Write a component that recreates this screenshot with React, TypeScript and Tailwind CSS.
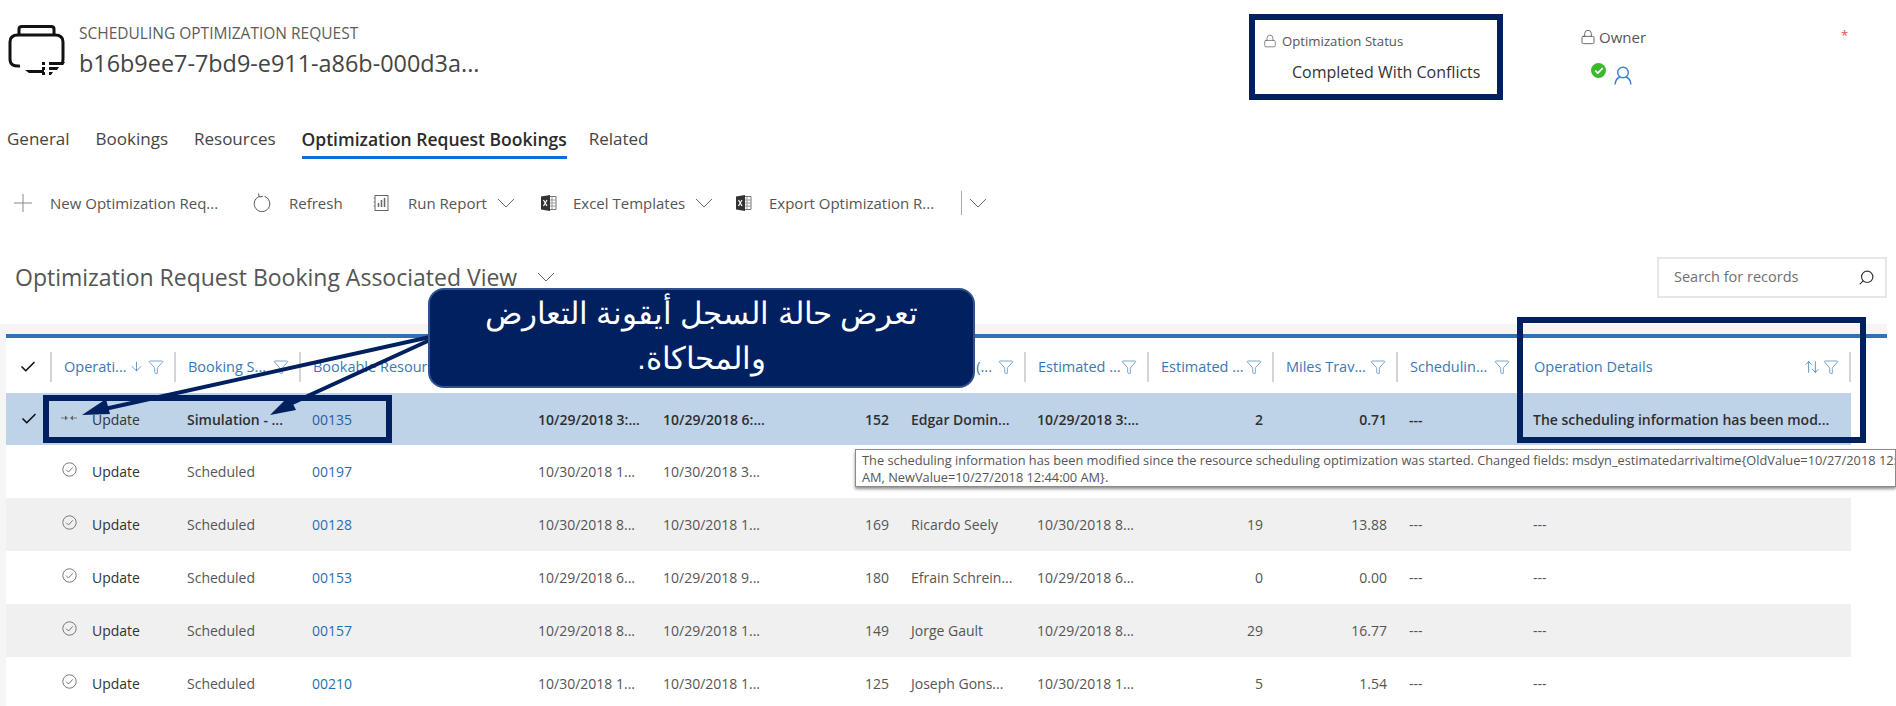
import { Check, Search, ArrowDown, ArrowUpDown, Lock, Filter } from "lucide-react";

const cols = "grid w-[1845px] grid-cols-[46px_124px_125px_226px_125px_126px_122px_126px_123px_125px_124px_124px_329px]";

type Row = {
  id: string;
  status: string;
  start: string;
  end: string;
  num?: string;
  name?: string;
  arrival?: string;
  est?: string;
  miles?: string;
  sched?: string;
  details?: string;
};

const rows: Row[] = [
  { id: "00197", status: "Scheduled", start: "10/30/2018 1...", end: "10/30/2018 3..." },
  { id: "00128", status: "Scheduled", start: "10/30/2018 8...", end: "10/30/2018 1...", num: "169", name: "Ricardo Seely", arrival: "10/30/2018 8...", est: "19", miles: "13.88", sched: "---", details: "---" },
  { id: "00153", status: "Scheduled", start: "10/29/2018 6...", end: "10/29/2018 9...", num: "180", name: "Efrain Schrein...", arrival: "10/29/2018 6...", est: "0", miles: "0.00", sched: "---", details: "---" },
  { id: "00157", status: "Scheduled", start: "10/29/2018 8...", end: "10/29/2018 1...", num: "149", name: "Jorge Gault", arrival: "10/29/2018 8...", est: "29", miles: "16.77", sched: "---", details: "---" },
  { id: "00210", status: "Scheduled", start: "10/30/2018 1...", end: "10/30/2018 1...", num: "125", name: "Joseph Gons...", arrival: "10/30/2018 1...", est: "5", miles: "1.54", sched: "---", details: "---" },
];

function AppIcon() {
  return (
    <svg width="58" height="54" viewBox="0 0 58 54" className="shrink-0">
      <g fill="none" stroke="#111" strokeWidth="3">
        <path d="M11 9V4Q11 1.5 14 1.5H43Q46 1.5 46 4V9" />
        <path d="M12 41Q2 42 2 34V17Q2 10 10 10H47Q55 10 55 17V34Q55 37 54 39" />
      </g>
      <path d="M17 45H36V48H21Z" fill="#111" />
      <path d="M41 37H57L55 40H41ZM41 42H51L49 45H41ZM41 47H45L43 50H41Z" fill="#111" />
      <path d="M34 37h3v3h-3zM34 42h3v3h-3zM34 47h3v3h-3z" fill="#111" />
    </svg>
  );
}

function Chevron() {
  return (
    <svg width="18" height="10" viewBox="0 0 18 10" className="shrink-0">
      <path d="M1 1L9 9L17 1" fill="none" stroke="#666" strokeWidth="1" />
    </svg>
  );
}

function PlusIcon() {
  return (
    <svg width="18" height="18" viewBox="0 0 18 18" className="shrink-0">
      <path d="M9 0V18M0 9H18" stroke="#888" strokeWidth="1" />
    </svg>
  );
}

function RefreshIcon() {
  return (
    <svg width="18" height="20" viewBox="0 0 18 20" className="shrink-0">
      <path d="M6 3.6A7.8 7.8 0 1 0 11.5 3.4" fill="none" stroke="#555" strokeWidth="1" />
      <path d="M5.5 0.5L6.3 4L9.8 3.4" fill="none" stroke="#555" strokeWidth="1" />
    </svg>
  );
}

function ExcelIcon() {
  return (
    <svg width="17" height="18" viewBox="0 0 17 18" className="shrink-0">
      <path d="M8 2.5H16V15.5H8" fill="none" stroke="#777" />
      <path d="M9 6H16M9 9H16M9 12H16M12 3V15" stroke="#999" />
      <path d="M1 2.5L10 1V17L1 15.5Z" fill="#333" />
      <path d="M3.5 6L7 12M7 6L3.5 12" stroke="#fff" strokeWidth="1.2" />
    </svg>
  );
}

function ReportIcon() {
  return (
    <svg width="16" height="18" viewBox="0 0 16 18" className="shrink-0">
      <rect x="2" y="1.5" width="13" height="15" fill="none" stroke="#666" />
      <path d="M5.5 13V9M8.5 13V6M11.5 13V4" stroke="#666" strokeWidth="1.5" />
      <path d="M0.5 4h2M0.5 8h2M0.5 12h2" stroke="#888" />
    </svg>
  );
}

function ConflictIcon() {
  return (
    <svg width="16" height="8" viewBox="0 0 16 8" className="shrink-0 -mt-[3px]">
      <path d="M0 4H5M11 4H16" stroke="#777" strokeWidth="1.2" />
      <path d="M4 1.5L7 4L4 6.5ZM12 1.5L9 4L12 6.5Z" fill="#666" />
    </svg>
  );
}

function CheckCircle() {
  return (
    <svg width="15" height="15" viewBox="0 0 15 15" className="shrink-0 -mt-[4px]">
      <circle cx="7.5" cy="7.5" r="6.7" fill="none" stroke="#777" />
      <path d="M4.2 7.7L6.5 10L10.8 5.3" fill="none" stroke="#777" />
    </svg>
  );
}

function HeaderCell({ label, filter = true, sort, end }: { label: string; filter?: boolean; sort?: "down" | "both"; end?: boolean }) {
  return (
    <div className="flex items-center h-[30px] pl-[12px] pr-[10px] border-r-2 border-[#d4d4d4]">
      <span className={`flex-1 min-w-0 whitespace-nowrap overflow-hidden text-[14.5px] text-[#3a78b5] ${end ? "text-right pr-[6px]" : ""}`}>{label}</span>
      {sort === "down" && <ArrowDown size={15} strokeWidth={1.2} className="text-[#3a78b5] mr-[4px] shrink-0" />}
      {sort === "both" && <ArrowUpDown size={16} strokeWidth={1.2} className="text-[#3a78b5] mr-[3px] shrink-0" />}
      {filter && <Filter size={16} strokeWidth={1} className="text-[#3a78b5] shrink-0" />}
    </div>
  );
}

function Cell({ children, right, bold }: { children?: React.ReactNode; right?: boolean; bold?: boolean }) {
  return (
    <div className={`px-[11px] text-[14px] whitespace-nowrap overflow-hidden ${right ? "text-right" : ""} ${bold ? "font-semibold text-[#2f2f2f]" : "text-[#555]"}`}>
      {children}
    </div>
  );
}

export default function App() {
  return (
    <div className="relative w-[1896px] h-[706px] overflow-hidden bg-white font-['Open_Sans',sans-serif]">
      {/* record header */}
      <div className="flex h-[112px]">
        <div className="ml-[8px] mt-[25px] w-[71px]">
          <AppIcon />
        </div>
        <div className="w-[1170px] pt-[23px]">
          <div className="text-[15.5px] leading-[20px] text-[#5c5c5c]">SCHEDULING OPTIMIZATION REQUEST</div>
          <div className="mt-[5px] text-[23.4px] leading-[30px] text-[#444]">b16b9ee7-7bd9-e911-a86b-000d3a...</div>
        </div>
        <div className="mt-[14px] w-[254px] h-[86px] border-[6px] border-[#002060] pl-[8px] pt-[13px]">
          <div className="flex items-center gap-[5px] text-[13.2px] leading-[16px] text-[#555]">
            <Lock size={14} strokeWidth={1.3} className="text-[#666]" />
            Optimization Status
          </div>
          <div className="ml-[29px] mt-[12px] text-[16px] leading-[22px] text-[#333] whitespace-nowrap">Completed With Conflicts</div>
        </div>
        <div className="ml-[77px] w-[265px] pt-[27px]">
          <div className="flex items-center gap-[3px] text-[15px] leading-[20px] text-[#555]">
            <Lock size={16} strokeWidth={1.3} className="text-[#555]" />
            Owner
          </div>
          <div className="ml-[11px] mt-[16px] flex items-start gap-[8px]">
            <div className="w-[15px] h-[15px] rounded-full bg-[#3db82e] flex items-center justify-center">
              <Check size={10} strokeWidth={4} className="text-white" />
            </div>
            <svg width="18" height="19" viewBox="0 0 18 19" className="mt-[3px]">
              <circle cx="9" cy="6.5" r="5.3" fill="none" stroke="#3d7fc9" strokeWidth="1.4" />
              <path d="M1 18.5C1.5 13.5 4.5 11.5 6 11M17 18.5C16.5 13.5 13.5 11.5 12 11" fill="none" stroke="#3d7fc9" strokeWidth="1.4" />
            </svg>
          </div>
        </div>
        <div className="-ml-[4px] pt-[27px] text-[13px] leading-[16px] text-[#e8474c]">*</div>
      </div>

      {/* tabs */}
      <div className="flex items-start gap-[26px] h-[70px] pl-[7px] pt-[15px] text-[17px] leading-[24px] text-[#444]">
        <span>General</span>
        <span>Bookings</span>
        <span>Resources</span>
        <span className="font-semibold text-[17.5px] text-[#2b2b2b] border-b-[3px] border-[#0f6ce0] h-[32px]">Optimization Request Bookings</span>
        <span className="-ml-[4px]">Related</span>
      </div>

      {/* command bar */}
      <div className="flex items-center h-[42px] pl-[14px] text-[15px] text-[#555] whitespace-nowrap">
        <div className="mr-[18px]"><PlusIcon /></div>
        <span className="w-[203px]">New Optimization Req...</span>
        <div className="mr-[18px]"><RefreshIcon /></div>
        <span className="w-[84px]">Refresh</span>
        <ReportIcon />
        <span className="ml-[19px] w-[89px]">Run Report</span>
        <div className="mr-[25px]"><Chevron /></div>
        <ExcelIcon />
        <span className="ml-[16px] w-[122px]">Excel Templates</span>
        <div className="mr-[22px]"><Chevron /></div>
        <ExcelIcon />
        <span className="ml-[17px] w-[192px]">Export Optimization R...</span>
        <div className="w-px h-[24px] bg-[#aaa] mr-[7px]" />
        <Chevron />
      </div>

      {/* view title + search */}
      <div className="flex items-center h-[60px] mt-[23px] pl-[15px] pr-[9px]">
        <span className="text-[23px] text-[#555] whitespace-nowrap">Optimization Request Booking Associated View</span>
        <div className="ml-[20px]"><Chevron /></div>
        <div className="ml-auto flex items-center justify-between w-[230px] h-[41px] border-2 border-[#e6e6e6] pl-[15px] pr-[10px] text-[14.5px] text-[#707070]">
          Search for records
          <Search size={17} strokeWidth={1.6} className="text-[#333] -scale-x-100" />
        </div>
      </div>

      {/* grid */}
      <div className="mt-[17px] w-[1887px] pt-[10px] pl-[6px] bg-[#f6f5f5]">
        <div className="border-t-4 border-[#2f72b5] bg-white h-[372px]">
          <div className={`${cols} items-center h-[55px] pt-[2px]`}>
            <div className="flex justify-center border-r-2 border-[#d4d4d4] h-[30px] items-center">
              <Check size={18} strokeWidth={2.2} className="text-[#111]" />
            </div>
            <HeaderCell label="Operati..." sort="down" />
            <HeaderCell label="Booking S..." />
            <HeaderCell label="Bookable Resource" />
            <HeaderCell label="" filter={false} />
            <HeaderCell label="" filter={false} />
            <HeaderCell label="" filter={false} />
            <HeaderCell label="(..." end />
            <HeaderCell label="Estimated ..." />
            <HeaderCell label="Estimated ..." />
            <HeaderCell label="Miles Trav..." />
            <HeaderCell label="Schedulin..." />
            <HeaderCell label="Operation Details" sort="both" />
          </div>

          <div className={`${cols} items-center h-[52px] bg-[#bed3e8]`}>
            <div className="flex justify-center">
              <Check size={18} strokeWidth={2.2} className="text-[#111]" />
            </div>
            <div className="flex items-center gap-[15px] pl-[9px] text-[14px] text-[#333]">
              <ConflictIcon />
              Update
            </div>
            <Cell bold>Simulation - ...</Cell>
            <Cell><span className="text-[#1d61a8]">00135</span></Cell>
            <Cell bold>10/29/2018 3:...</Cell>
            <Cell bold>10/29/2018 6:...</Cell>
            <Cell right bold>152</Cell>
            <Cell bold>Edgar Domin...</Cell>
            <Cell bold>10/29/2018 3:...</Cell>
            <Cell right bold>2</Cell>
            <Cell right bold>0.71</Cell>
            <Cell bold>---</Cell>
            <Cell bold>The scheduling information has been mod...</Cell>
          </div>

          {rows.map((r, i) => (
            <div key={r.id} className={`${cols} items-center h-[53px] ${i % 2 === 1 ? "bg-[#f0f0f0]" : "bg-white"}`}>
              <div />
              <div className="flex items-center gap-[15px] pl-[10px] text-[14px] text-[#333]">
                <CheckCircle />
                Update
              </div>
              <Cell>{r.status}</Cell>
              <Cell><span className="text-[#1f6fb8]">{r.id}</span></Cell>
              <Cell>{r.start}</Cell>
              <Cell>{r.end}</Cell>
              <Cell right>{r.num}</Cell>
              <Cell>{r.name}</Cell>
              <Cell>{r.arrival}</Cell>
              <Cell right>{r.est}</Cell>
              <Cell right>{r.miles}</Cell>
              <Cell>{r.sched}</Cell>
              <Cell>{r.details}</Cell>
            </div>
          ))}
        </div>
      </div>

      {/* tooltip */}
      <div className="absolute left-[855px] top-[449px] w-[1041px] h-[38px] bg-white border border-[#8a8a8a] shadow-[0_2px_3px_rgba(0,0,0,0.45)] pl-[6px] pt-[2px] text-[12.8px] leading-[17px] text-[#555] whitespace-nowrap overflow-hidden">
        <div>The scheduling information has been modified since the resource scheduling optimization was started. Changed fields: msdyn_estimatedarrivaltime{"{"}OldValue=10/27/2018 12:44:00</div>
        <div>AM, NewValue=10/27/2018 12:44:00 AM{"}"}.</div>
      </div>

      {/* annotation boxes */}
      <div className="absolute left-[43px] top-[395px] w-[349px] h-[48px] border-[6px] border-[#002060]" />
      <div className="absolute left-[1517px] top-[317px] w-[349px] h-[126px] border-[6px] border-[#002060]" />

      {/* callout arrows */}
      <svg className="absolute left-0 top-0 pointer-events-none" width="1896" height="706">
        <path d="M430 337L100 410" stroke="#002060" strokeWidth="4" />
        <path d="M82 415L106 399L110 414Z" fill="#002060" />
        <path d="M430 340L288 405" stroke="#002060" strokeWidth="4" />
        <path d="M270 415L289 396L296 410Z" fill="#002060" />
      </svg>

      {/* callout */}
      <div dir="rtl" className="absolute left-[428px] top-[288px] w-[547px] h-[100px] rounded-[16px] bg-[#002060] border-2 border-[#2f528f] flex items-center justify-center text-center text-white text-[30.5px] leading-[45px] pb-[4px] font-['Liberation_Sans',sans-serif]">
        <div>
          تعرض حالة السجل أيقونة التعارض
          <br />
          والمحاكاة.
        </div>
      </div>
    </div>
  );
}
